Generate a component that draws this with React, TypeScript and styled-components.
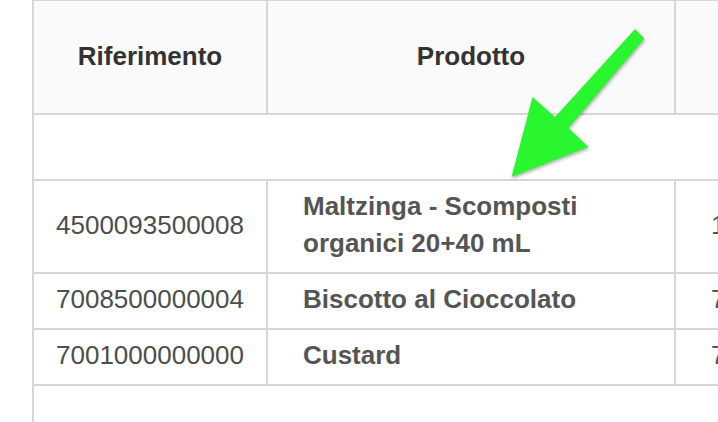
import React from 'react';
import styled, { createGlobalStyle } from 'styled-components';

interface IRow {
  ref: string;
  product: string;
  extra: string;
}

const rows: IRow[] = [
  { ref: '4500093500008', product: 'Maltzinga - Scomposti organici 20+40 mL', extra: '1,00' },
  { ref: '7008500000004', product: 'Biscotto al Cioccolato', extra: '7,50' },
  { ref: '7001000000000', product: 'Custard', extra: '7,90' },
];

const GreenArrow: React.FC = () => (
  <ArrowSvg width="718" height="422" viewBox="0 0 718 422">
    <polygon
      points="635,29 644.5,38.5 568.5,128 588.5,147 511.5,177 532.5,97 555,117"
      fill="#2af62f"
    />
  </ArrowSvg>
);

const App: React.FC = () => {
  return (
    <Page>
      <GlobalStyle />
      <Frame>
        <Table>
          <colgroup>
            <Col $width={234} />
            <Col $width={408} />
            <Col $width={300} />
          </colgroup>
          <thead>
            <tr>
              <HeadCell>Riferimento</HeadCell>
              <HeadCell>Prodotto</HeadCell>
              <HeadCell>Prezzo</HeadCell>
            </tr>
          </thead>
          <tbody>
            <tr>
              <SpacerCell colSpan={3} />
            </tr>
            {rows.map((row) => (
              <tr key={row.ref}>
                <RefCell>{row.ref}</RefCell>
                <ProductCell>{row.product}</ProductCell>
                <ExtraCell>{row.extra}</ExtraCell>
              </tr>
            ))}
          </tbody>
        </Table>
      </Frame>
      <GreenArrow />
    </Page>
  );
};

export default App;

const GlobalStyle = createGlobalStyle`
  html, body {
    margin: 0;
    padding: 0;
    background: #ffffff;
    overflow: hidden;
  }
  body {
    font-family: "Liberation Sans", Arial, Helvetica, sans-serif;
  }
`;

const Page = styled.div`
  position: relative;
  width: 718px;
  height: 422px;
  overflow: hidden;
  padding-left: 32px;
  box-sizing: border-box;
`;

const Frame = styled.div`
  border-left: 2px solid #d6d6d6;
  border-top: 1px solid #d6d6d6;
  height: 100%;
  box-sizing: border-box;
`;

const Table = styled.table`
  border-collapse: separate;
  border-spacing: 0;
  table-layout: fixed;
  width: 942px;
  font-size: 26px;
  line-height: 37px;
`;

const Col = styled.col<{ $width: number }>`
  width: ${(p) => p.$width}px;
`;

const HeadCell = styled.th`
  background: #fafafa;
  color: #333333;
  font-weight: bold;
  text-align: center;
  padding: 37px 0 38px;
  border-right: 2px solid #d6d6d6;
  border-bottom: 2px solid #d6d6d6;
  white-space: nowrap;
`;

const SpacerCell = styled.td`
  height: 64px;
  padding: 0;
  border-bottom: 2px solid #d6d6d6;
`;

const BodyCell = styled.td`
  padding: 7px 35px 10px;
  color: #555555;
  vertical-align: middle;
  border-right: 2px solid #d6d6d6;
  border-bottom: 2px solid #d6d6d6;
`;

const RefCell = styled(BodyCell)`
  text-align: center;
  padding-left: 0;
  padding-right: 0;
  color: #4d4d4d;
`;

const ProductCell = styled(BodyCell)`
  font-weight: bold;
  text-align: left;
`;

const ExtraCell = styled(BodyCell)`
  text-align: left;
  white-space: nowrap;
`;

const ArrowSvg = styled.svg`
  position: absolute;
  left: 0;
  top: 0;
  pointer-events: none;
  filter: drop-shadow(1px 2px 1.5px rgba(0, 0, 0, 0.28));
`;
